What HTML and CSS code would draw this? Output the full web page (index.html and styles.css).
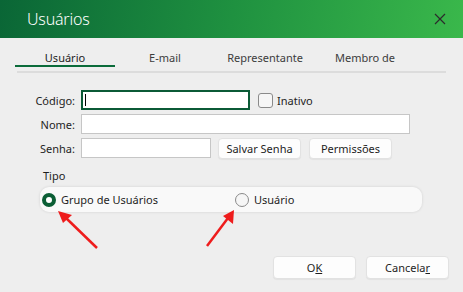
FILE: index.html
```html
<!DOCTYPE html>
<html>
<head>
  <title>Usuários</title>
  <link rel="stylesheet" href="styles.css">
</head>
<body>
  <div class="window">
    <div class="titlebar">
      <span class="title">Usuários</span>
      <svg class="close" width="12" height="12" viewBox="0 0 12 12">
        <path d="M1 1 L11 11 M11 1 L1 11" stroke="#2b2b2b" stroke-width="1.2" fill="none"/>
      </svg>
    </div>

    <div class="tabs">
      <div class="tab active">Usuário</div>
      <div class="tab">E-mail</div>
      <div class="tab">Representante</div>
      <div class="tab">Membro de</div>
    </div>
    <div class="tab-line"></div>

    <div class="form">
      <div class="row">
        <label class="lbl">Código:</label>
        <div class="input input-code focus"><span class="caret"></span></div>
        <span class="check"></span>
        <span class="check-label">Inativo</span>
      </div>
      <div class="row">
        <label class="lbl">Nome:</label>
        <div class="input input-name"></div>
      </div>
      <div class="row">
        <label class="lbl">Senha:</label>
        <div class="input input-pass"></div>
        <button class="btn btn-save">Salvar Senha</button>
        <button class="btn">Permissões</button>
      </div>
    </div>

    <div class="group">
      <div class="group-title">Tipo</div>
      <div class="group-box">
        <div class="radio-item item-first">
          <span class="radio checked"></span>
          <span>Grupo de Usuários</span>
        </div>
        <div class="radio-item">
          <span class="radio"></span>
          <span>Usuário</span>
        </div>
      </div>
    </div>

    <div class="footer">
      <button class="btn">O<u>K</u></button>
      <button class="btn">Cancela<u>r</u></button>
    </div>

    <!-- arrows drawn over the dialog -->
    <svg class="arrows" width="463" height="292" viewBox="0 0 463 292">
      <line x1="97" y1="248" x2="66" y2="218" stroke="#ee1c1c" stroke-width="2.5"/>
      <polygon points="58,211 72,215 63,223" fill="#ee1c1c"/>
      <line x1="207" y1="246" x2="228" y2="218" stroke="#ee1c1c" stroke-width="2.5"/>
      <polygon points="234,210 233,224 223,216" fill="#ee1c1c"/>
    </svg>
  </div>
</body>
</html>
```

FILE: styles.css
```css
body {
  margin: 0;
  font-family: "Noto Sans", "Open Sans", sans-serif;
  font-size: 11px;
  color: #1e1e1e;
}
.window {
  position: relative;
  width: 463px;
  height: 292px;
  background-color: #eeeeee;
  overflow: hidden;
}
.titlebar {
  height: 38px;
  display: flex;
  align-items: center;
  justify-content: space-between;
  padding: 0 17px 0 27px;
  background: linear-gradient(100deg, #0a6636 0%, #1f9140 50%, #3ab84b 100%);
}
.title {
  color: #ffffff;
  font-size: 16px;
  font-weight: 300;
  letter-spacing: -0.2px;
}
.tabs {
  display: flex;
  padding-left: 15px;
}
.tab {
  width: 100px;
  text-align: center;
  padding-top: 12px;
  line-height: 15px;
  border-bottom: 2px solid transparent;
  color: #3c3c3c;
}
.tab.active {
  color: #1e1e1e;
  border-bottom: 2px solid #0b6b3a;
}
.tab-line {
  height: 2px;
  margin: 4px 17px 0 17px;
  background-color: #dcdcdc;
}
.form {
  display: flex;
  flex-direction: column;
  gap: 4px;
  margin-top: 17px;
}
.row {
  display: flex;
  align-items: center;
  height: 20px;
}
.lbl {
  width: 75px;
  text-align: right;
  margin-right: 6px;
}
.input {
  box-sizing: border-box;
  height: 20px;
  background-color: #ffffff;
  border: 1px solid #c6c6c6;
}
.input.focus {
  border: 2px solid #0b5a36;
  display: flex;
  align-items: center;
  padding-left: 2px;
}
.caret {
  width: 1px;
  height: 12px;
  background-color: #000000;
}
.input-code { width: 169px; }
.input-name { width: 329px; }
.input-pass { width: 130px; }
.check {
  box-sizing: border-box;
  width: 15px;
  height: 15px;
  margin-left: 8px;
  border: 1px solid #8a8a8a;
  border-radius: 3px;
  background-color: #f6f6f6;
}
.check-label {
  margin-left: 4px;
}
.btn {
  box-sizing: border-box;
  width: 83px;
  height: 21px;
  padding: 0;
  font-family: inherit;
  font-size: 11px;
  color: #1e1e1e;
  background-color: #fdfdfd;
  border: 1px solid #e2e2e2;
  border-radius: 4px;
  box-shadow: 0 1px 1px rgba(0,0,0,0.05);
  margin-left: 8px;
}
.btn-save {
  margin-left: 7px;
}
.group {
  margin: 10px 0 0 40px;
}
.group-title {
  padding-left: 3px;
  line-height: 16px;
}
.group-box {
  box-sizing: border-box;
  width: 382px;
  height: 25px;
  margin-top: 3px;
  display: flex;
  align-items: center;
  background-color: #f9f9f9;
  border-radius: 9px;
  box-shadow: 0 0 3px rgba(0,0,0,0.12);
}
.radio-item {
  display: flex;
  align-items: center;
  gap: 5px;
}
.item-first {
  width: 193px;
  margin-left: 2px;
}
.radio {
  box-sizing: border-box;
  width: 14px;
  height: 14px;
  border-radius: 50%;
  border: 1px solid #8a8a8a;
  background-color: #f6f6f6;
}
.radio.checked {
  border: 4px solid #0b5e35;
  background-color: #ffffff;
}
.footer {
  display: flex;
  justify-content: flex-end;
  padding-right: 14px;
  margin-top: 44px;
}
.footer .btn {
  height: 23px;
  margin-left: 10px;
}
.arrows {
  position: absolute;
  left: 0;
  top: 0;
  pointer-events: none;
}
```
